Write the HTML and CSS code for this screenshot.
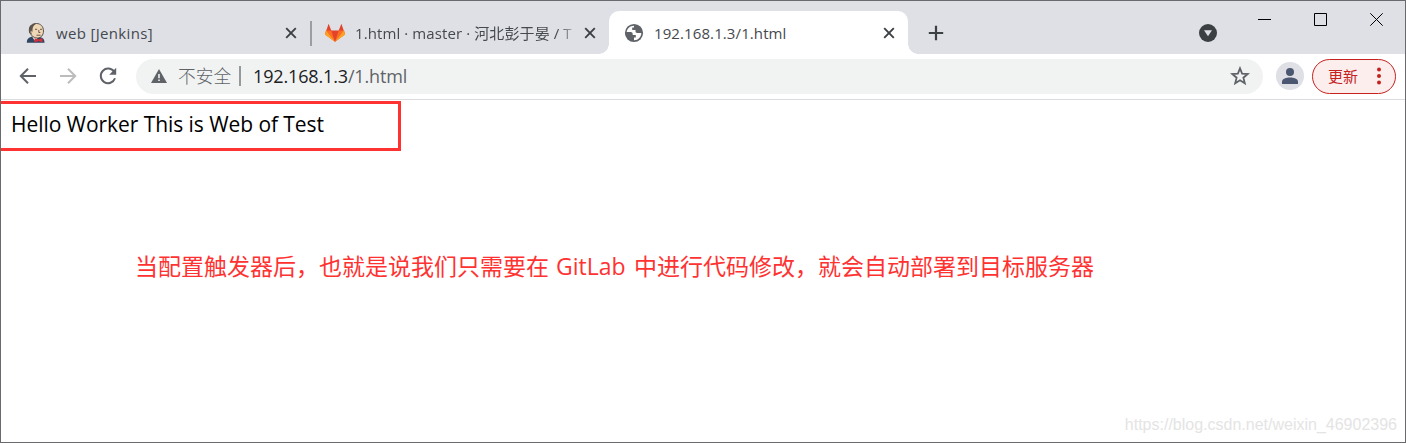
FILE: index.html
```
<!DOCTYPE html>
<html lang="zh-CN">
<head>
<meta charset="utf-8">
<title>192.168.1.3/1.html</title>
<link rel="stylesheet" href="styles.css">
</head>
<body>
<div class="window">
  <header class="titlebar">
    <div class="tabs">
      <div class="tab">
        <svg class="favicon" viewBox="0 0 20 20">
          <path d="M.8 19.700c0-3.500 1.500-5.200 5.200-6.200l8 .5c3 .5 4.500 2.500 4.500 5.700z" fill="#2f4560"/>
          <path d="M5.500 12.500l3 5 4-3 0-3z" fill="#f4f1ea"/>
          <path d="M3.500 6.500C3.500 2.500 6.500.5 10.500.5s7 3 7 7.500c0 4-2.500 7-6 7-4.500 0-8-3.500-8-8.500z" fill="#efd6b4" stroke="#4c433c" stroke-width=".9"/>
          <path d="M3 9C2 3 6 .3 11 .5 7.500 1.800 6.500 4 6.500 8l-1 3C4 10.500 3 10 3 9z" fill="#5b524b"/>
          <path d="M5.500 7.500c-2 0-1.500 3.500.5 3.500" fill="#efd6b4" stroke="#4c433c" stroke-width=".6"/>
          <path d="M9 6.300h2.200M14 6.300h2.200M12.800 7v2.500h1.500M10.500 12.200h4" fill="none" stroke="#5b4a40" stroke-width=".9"/>
          <path d="M8.500 15.200l4 1.300 4-1.500v4.200l-4-1.300-4 1.500z" fill="#d8303a"/>
        </svg>
        <span class="title title-jenkins">web [Jenkins]</span>
        <svg class="close" viewBox="0 0 12 12"><path d="M1.200 1.200l9.600 9.600M10.800 1.200L1.200 10.800"/></svg>
      </div>
      <div class="tab tab-divided">
        <svg class="favicon" viewBox="0 0 20 20">
          <path d="M3.600.7L6.300 7.500h7.400L16.400.7 20 11.200 10 18.800 0 11.200z" fill="#e24329"/>
          <path d="M1 7.500h5.300L10 18.800 0 11.300zM19 7.500h-5.300L10 18.800l10-7.500z" fill="#fc6d26"/>
          <path d="M1 7.500L10 18.800 0 11.800zM19 7.500L10 18.800l10-7z" fill="#fca326"/>
        </svg>
        <span class="title title-gitlab">1.html · master · 河北彭于晏 / T</span>
        <svg class="close" viewBox="0 0 12 12"><path d="M1.200 1.200l9.600 9.600M10.800 1.200L1.200 10.800"/></svg>
      </div>
      <div class="tab tab-active">
        <svg class="favicon" viewBox="0 0 20 20">
          <circle cx="10" cy="10" r="9.100" fill="#5f6368"/>
          <path d="M10 2.700c-4 0-7 3-7.300 6.300h4.100c1.200 0 1.900.8 1.900 1.900v1h3.100v2.500H10v2.800c4.200.1 7.300-3.200 7.300-7.200h-4.100c-1 0-1.700-.7-1.700-1.700V6.900H8.200V4.600H10z" fill="#fff"/>
        </svg>
        <span class="title title-host">192.168.1.3/1.html</span>
        <svg class="close" viewBox="0 0 12 12"><path d="M1.200 1.200l9.600 9.600M10.800 1.200L1.200 10.800"/></svg>
      </div>
    </div>
    <svg class="new-tab" viewBox="0 0 16 16"><path d="M8 .8v14.400M.8 8h14.400"/></svg>
    <svg class="tab-search" viewBox="0 0 18 18"><circle cx="9" cy="9" r="9" fill="#3c4043"/><path d="M5 6.300h8L9 12.300z" fill="#dee0e6"/></svg>
    <div class="controls">
      <svg viewBox="0 0 13 13"><path d="M0 6.500h13"/></svg>
      <svg viewBox="0 0 13 13"><path d="M.5.5h12v12H.5z"/></svg>
      <svg viewBox="0 0 13 13"><path d="M.3.300l12.400 12.400M12.700.3L.3 12.700"/></svg>
    </div>
  </header>
  <nav class="toolbar">
    <svg class="nav-icon" viewBox="0 0 20 20"><path d="M18 10H3M10 2.800L2.800 10l7.200 7.200"/></svg>
    <svg class="nav-icon nav-disabled" viewBox="0 0 20 20"><path d="M2 10h15M10 2.800l7.200 7.200-7.200 7.200"/></svg>
    <svg class="nav-icon" viewBox="0 0 20 20"><path d="M16.300 6A7.300 7.300 0 1 0 17 12.200"/><path class="solid" d="M18.200 1.800v7h-7z"/></svg>
    <div class="omnibox">
      <svg class="warning" viewBox="0 0 16 14"><path d="M8 0l8 14H0z" fill="#5f6368"/><path d="M8 5v4.300M8 10.500v1.600" stroke="#f1f3f3" stroke-width="1.600"/></svg>
      <span class="insecure">不安全</span>
      <span class="bar"></span>
      <span class="url"><b>192.168.1.3</b>/1.html</span>
      <svg class="star" viewBox="0 0 20 20"><path d="M10 2.300l2.100 5.300 5.700.4-4.400 3.700 1.400 5.500L10 14.200l-4.800 3 1.400-5.500L2.200 8l5.700-.4z"/></svg>
    </div>
    <svg class="avatar" viewBox="0 0 28 28"><circle cx="14" cy="14" r="14" fill="#dee0e6"/><circle cx="14" cy="10" r="4" fill="#4b5670"/><path d="M6 22v-2.300c0-3 4.500-4.300 8-4.300s8 1.300 8 4.300V22z" fill="#4b5670"/></svg>
    <div class="update"><span>更新</span><svg viewBox="0 0 4 18"><circle cx="2" cy="2.500" r="2"/><circle cx="2" cy="9" r="2"/><circle cx="2" cy="15.500" r="2"/></svg></div>
  </nav>
  <main class="page">
    <div class="highlight"><span class="hello">Hello Worker This is Web of Test</span></div>
    <p class="note">当配置触发器后，也就是说我们只需要在<span class="note-latin">GitLab</span>中进行代码修改，就会自动部署到目标服务器</p>
    <p class="watermark">https://blog.csdn.net/weixin_46902396</p>
  </main>
</div>
</body>
</html>
```
FILE: styles.css
```
* { box-sizing: border-box; }
body {
  margin: 0;
  background: #fff;
  font-family: "Open Sans", "Noto Sans CJK SC", sans-serif;
}
svg { display: block; flex: none; }
.window {
  width: 1406px;
  height: 443px;
  display: flex;
  flex-direction: column;
  border: 1px solid #6a6a6e;
  overflow: hidden;
}
.titlebar {
  height: 53px;
  flex: none;
  display: flex;
  align-items: flex-start;
  padding-left: 10px;
  background: #dee0e6;
}
.tabs { display: flex; padding-top: 10px; }
.tab {
  width: 299px;
  height: 43px;
  display: flex;
  align-items: center;
  padding: 0 13px 0 15px;
  position: relative;
}
.tab-divided::before {
  content: "";
  position: absolute;
  left: 0;
  top: 10px;
  width: 2px;
  height: 25px;
  background: #9b9da2;
}
.tab-active { background: #fff; border-radius: 10px 10px 0 0; }
.tab-active::before,
.tab-active::after {
  content: "";
  position: absolute;
  bottom: 0;
  width: 10px;
  height: 10px;
}
.tab-active::before { left: -10px; background: radial-gradient(circle at 0 0, transparent 9.5px, #fff 10px); }
.tab-active::after { right: -10px; background: radial-gradient(circle at 100% 0, transparent 9.5px, #fff 10px); }
.favicon { width: 20px; height: 20px; margin-right: 10px; }
.title {
  flex: 1;
  min-width: 0;
  font-size: 15px;
  line-height: 20px;
  color: #45494d;
  white-space: nowrap;
  overflow: hidden;
}
.title-jenkins { letter-spacing: .33px; }
.title-host { letter-spacing: .1px; }
.title-gitlab {
  margin-right: 7px;
  letter-spacing: .1px;
  -webkit-mask-image: linear-gradient(90deg, #000 202px, transparent 226px);
  mask-image: linear-gradient(90deg, #000 202px, transparent 226px);
}
.close { width: 12px; height: 12px; fill: none; stroke: #3c4043; stroke-width: 1.9; }
.new-tab { width: 16px; height: 16px; margin: 24px 0 0 20px; fill: none; stroke: #3c4043; stroke-width: 2.2; }
.tab-search { width: 18px; height: 18px; margin: 23px 0 0 auto; }
.controls { display: flex; gap: 43px; padding: 12px 22px 0 41px; }
.controls svg { width: 13px; height: 13px; fill: none; stroke: #000; stroke-width: 1; }
.toolbar {
  height: 46px;
  flex: none;
  display: flex;
  align-items: center;
  padding: 0 9px 1px 17px;
  border-bottom: 1px solid #dadce0;
}
.nav-icon { width: 20px; height: 20px; margin-right: 20px; fill: none; stroke: #5f6368; stroke-width: 2; }
.nav-disabled { stroke: #babcbe; }
.nav-icon .solid { fill: #5f6368; stroke: none; }
.omnibox {
  width: 1127px;
  height: 35px;
  margin-left: -2px;
  flex: none;
  display: flex;
  align-items: center;
  padding: 0 13px 0 15px;
  border-radius: 18px;
  background: #f1f3f3;
}
.warning { width: 16px; height: 14px; margin-right: 11px; }
.insecure { width: 54px; font-size: 17.7px; line-height: 24px; color: #5f6368; font-weight: 300; white-space: nowrap; }
.bar { width: 2px; height: 20px; margin: 0 12px 0 7px; background: #96999c; }
.url { flex: 1; font-size: 18px; line-height: 24px; color: #5f6368; letter-spacing: -.15px; }
.url b { font-weight: 400; color: #202124; }
.star { width: 20px; height: 20px; fill: none; stroke: #5f6368; stroke-width: 1.8; }
.avatar { width: 28px; height: 28px; margin-left: 13px; }
.update {
  width: 84px;
  height: 35px;
  margin-left: auto;
  display: flex;
  align-items: center;
  padding: 0 14px 0 15px;
  justify-content: space-between;
  border: 1.5px solid #c5221f;
  border-radius: 18px;
  background: #fceeed;
  color: #c5221f;
  font-size: 15px;
  line-height: 20px;
}
.update svg { width: 4px; height: 18px; fill: #c5221f; }
.page { flex: 1; display: flex; flex-direction: column; padding-top: 1px; }
.highlight {
  width: 401px;
  height: 50px;
  margin-left: -1px;
  padding: 5px 0 0 10px;
  border: 3px solid #ff3232;
  border-left-width: 1px;
}
.hello { display: block; font-size: 21px; line-height: 30px; letter-spacing: -.06px; color: #000; white-space: nowrap; }
.note {
  margin: 98px 0 0 134px;
  font-size: 23px;
  line-height: 34px;
  color: #ff3232;
  white-space: nowrap;
}
.note-latin { display: inline-block; width: 85px; padding-left: 7px; }
.watermark {
  margin: auto 8px 6px auto;
  font: 16px/22px "Liberation Sans", Arial, sans-serif;
  color: #e4e4e4;
}
```
